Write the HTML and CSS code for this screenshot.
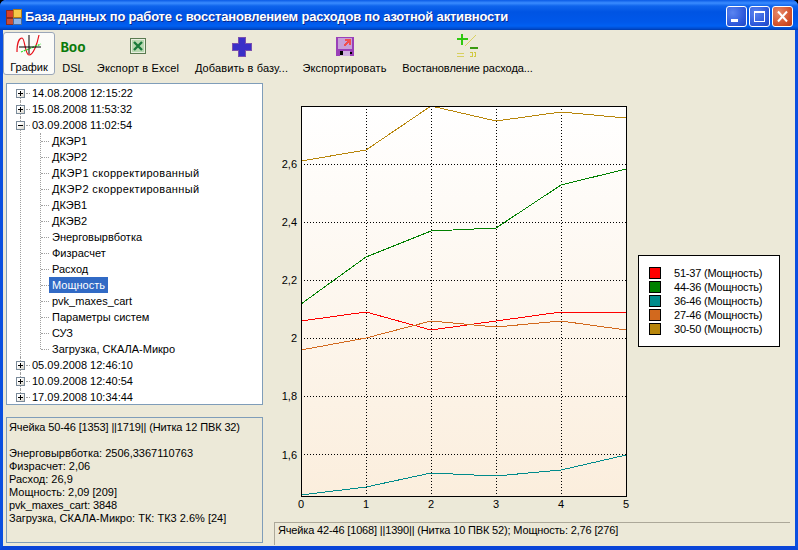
FILE: index.html
```html
<!DOCTYPE html>
<html lang="ru">
<head>
<meta charset="utf-8">
<title>База данных</title>
<link rel="stylesheet" href="styles.css">
</head>
<body>
<div class="window">
  <header class="titlebar">
    <svg class="app-icon" width="16" height="16" viewBox="0 0 16 16" shape-rendering="crispEdges">
      <rect x="0" y="1" width="7" height="7" fill="#d8402a" stroke="#8a2a20"/>
      <rect x="7" y="0" width="8" height="8" fill="#f6c84a" stroke="#b07a18"/>
      <rect x="0" y="9" width="7" height="6" fill="#c8503a" stroke="#8a2a20"/>
      <rect x="7" y="9" width="8" height="6" fill="#8fb4e8" stroke="#4a6a9a"/>
    </svg>
    <span class="title-text">База данных по работе с восстановлением расходов по азотной активности</span>
    <div class="win-buttons">
      <span class="win-btn"><svg width="19" height="19" viewBox="0 0 19 19" shape-rendering="crispEdges"><rect x="4" y="12" width="7" height="3" fill="#fff"/></svg></span>
      <span class="win-btn"><svg width="19" height="19" viewBox="0 0 19 19" shape-rendering="crispEdges"><rect x="4.5" y="4.5" width="10" height="10" fill="none" stroke="#fff"/><rect x="4" y="4" width="11" height="2" fill="#fff"/></svg></span>
      <span class="win-btn win-close"><svg width="19" height="19" viewBox="0 0 19 19"><path d="M5 4.500L14 14.500M14 4.500L5 14.500" stroke="#fff" stroke-width="2"/></svg></span>
    </div>
  </header>

  <nav class="toolbar">
    <div class="tool tool-active tool-graph">
      <svg class="tool-icon" width="26" height="24" viewBox="0 0 26 24">
        <path d="M1 19C1 8 4 5 6 5C9 5 9 22 13 22C17 22 21 12 23 2" fill="none" stroke="#e8101a" stroke-width="1.200"/>
        <path d="M5 19L25 11" fill="none" stroke="#30e030" stroke-width="1.300" stroke-dasharray="2 1"/>
        <path d="M13 2V21M3 14H25" stroke="#000" stroke-width="1"/>
      </svg>
      <span>График</span>
    </div>
    <div class="tool tool-dsl">
      <span class="boo">Boo</span>
      <span>DSL</span>
    </div>
    <div class="tool tool-excel">
      <svg class="tool-icon" width="16" height="16" viewBox="0 0 16 16" shape-rendering="crispEdges">
        <rect x="0.500" y="0.500" width="15" height="15" fill="#e8efe0" stroke="#5a7a50"/>
        <rect x="2" y="2" width="12" height="12" fill="#b8d8b0"/>
        <path d="M4 4L12 12M12 4L4 12" stroke="#1a7a3a" stroke-width="2.400" shape-rendering="auto"/>
      </svg>
      <span>Экспорт в Excel</span>
    </div>
    <div class="tool tool-add">
      <svg class="tool-icon" width="20" height="20" viewBox="0 0 20 20" shape-rendering="crispEdges">
        <path d="M6.500 .5H13.500V6.500H19.500V13.500H13.500V19.500H6.500V13.500H.5V6.500H6.500Z" fill="#3a2fc8" stroke="#7a50b0"/>
      </svg>
      <span>Добавить в базу...</span>
    </div>
    <div class="tool tool-export">
      <svg class="tool-icon" width="18" height="19" viewBox="0 0 18 19" shape-rendering="crispEdges">
        <rect width="18" height="19" fill="#9a40b8"/>
        <rect x="2" y="1" width="14" height="11" fill="#c8a0d8"/>
        <path d="M8 9L13 4M9 3H14V8" fill="none" stroke="#f05050" stroke-width="2"/>
        <rect x="4" y="14" width="10" height="5" fill="#d0b0e0"/>
        <rect x="4" y="14" width="3" height="4" fill="#000"/>
        <rect x="14" y="15" width="2" height="2" fill="#000"/>
      </svg>
      <span>Экспортировать</span>
    </div>
    <div class="tool tool-restore">
      <svg class="tool-icon" width="22" height="23" viewBox="0 0 22 23">
        <g shape-rendering="crispEdges">
          <path d="M0 5H11M5 0V11" stroke="#30c810" stroke-width="2"/>
          <path d="M13 14H21" stroke="#3a9a10" stroke-width="2"/>
          <path d="M0 19H7M0 22H7" stroke="#d8d060" stroke-width="1"/>
          <path d="M13 18H15V22H13M17 18H18V22H17" fill="none" stroke="#d0c840" stroke-width="1"/>
        </g>
        <path d="M8 12L19 1" stroke="#d8d060" stroke-width="1"/>
      </svg>
      <span>Востановление расхода...</span>
    </div>
  </nav>

  <main class="content">
    <section class="left-col">
      <ul class="tree">
        <li class="root"><div class="row"><span class="exp exp-plus"></span><span class="lbl">14.08.2008 12:15:22</span></div></li>
        <li class="root"><div class="row"><span class="exp exp-plus"></span><span class="lbl">15.08.2008 11:53:32</span></div></li>
        <li class="root"><div class="row"><span class="exp"></span><span class="lbl">03.09.2008 11:02:54</span></div>
          <ul class="children">
            <li class="row child"><span class="lbl">ДКЭР1</span></li>
            <li class="row child"><span class="lbl">ДКЭР2</span></li>
            <li class="row child"><span class="lbl lbl-wide">ДКЭР1 скорректированный</span></li>
            <li class="row child"><span class="lbl lbl-wide">ДКЭР2 скорректированный</span></li>
            <li class="row child"><span class="lbl">ДКЭВ1</span></li>
            <li class="row child"><span class="lbl">ДКЭВ2</span></li>
            <li class="row child"><span class="lbl">Энерговырвботка</span></li>
            <li class="row child"><span class="lbl">Физрасчет</span></li>
            <li class="row child"><span class="lbl">Расход</span></li>
            <li class="row child"><span class="lbl lbl-selected">Мощность</span></li>
            <li class="row child"><span class="lbl">pvk_maxes_cart</span></li>
            <li class="row child"><span class="lbl">Параметры систем</span></li>
            <li class="row child"><span class="lbl">СУЗ</span></li>
            <li class="row child"><span class="lbl">Загрузка, СКАЛА-Микро</span></li>
          </ul>
        </li>
        <li class="root"><div class="row"><span class="exp exp-plus"></span><span class="lbl">05.09.2008 12:46:10</span></div></li>
        <li class="root"><div class="row"><span class="exp exp-plus"></span><span class="lbl">10.09.2008 12:40:54</span></div></li>
        <li class="root root-last"><div class="row"><span class="exp exp-plus"></span><span class="lbl">17.09.2008 10:34:44</span></div></li>
      </ul>
      <div class="info">
        <p class="tight">Ячейка 50-46 [1353] ||1719|| (Нитка 12 ПВК 32)</p>
        <p class="blank">&nbsp;</p>
        <p>Энерговырвботка: 2506,3367110763</p>
        <p>Физрасчет: 2,06</p>
        <p>Расход: 26,9</p>
        <p>Мощность: 2,09 [209]</p>
        <p class="tight">pvk_maxes_cart: 3848</p>
        <p>Загрузка, СКАЛА-Микро: ТК: ТК3 2.6% [24]</p>
      </div>
    </section>

    <section class="right-col">
      <div class="chart-row">
        <svg class="chart" width="364" height="439" viewBox="274 83 364 439">
          <defs>
            <linearGradient id="plotbg" x1="0" y1="0" x2="0" y2="1">
              <stop offset="0" stop-color="#ffffff"/>
              <stop offset="1" stop-color="#fbeedd"/>
            </linearGradient>
          </defs>
          <rect class="plot-bg" x="301" y="106" width="325" height="390" fill="url(#plotbg)"/>
          <g class="grid">
            <path d="M366.500 106V496M431.500 106V496M496.500 106V496M561.500 106V496"/>
            <path d="M301 164.500H626M301 222.500H626M301 280.500H626M301 338.500H626M301 396.500H626M301 454.500H626"/>
          </g>
          <g class="series">
            <polyline class="s-red" points="301,321 366,312 431,330 496,321 561,312 626,312"/>
            <polyline class="s-green" points="301,304 366,257 431,231 496,228 561,185 626,169"/>
            <polyline class="s-teal" points="301,495 366,487 431,473 496,476 561,470 626,455"/>
            <polyline class="s-orange" points="301,350 366,338 431,321 496,327 561,321 626,330"/>
            <polyline class="s-gold" points="301,161 366,150 431,106 496,121 561,112 626,118"/>
          </g>
          <rect class="plot-frame" x="301.500" y="106.500" width="325" height="390"/>
          <g class="y-labels">
            <text x="297" y="168">2,6</text>
            <text x="297" y="226">2,4</text>
            <text x="297" y="284">2,2</text>
            <text x="297" y="342">2</text>
            <text x="297" y="400">1,8</text>
            <text x="297" y="459">1,6</text>
          </g>
          <g class="x-labels">
            <text x="301" y="508">0</text>
            <text x="366" y="508">1</text>
            <text x="431" y="508">2</text>
            <text x="496" y="508">3</text>
            <text x="561" y="508">4</text>
            <text x="626" y="508">5</text>
          </g>
        </svg>
        <div class="legend">
          <div class="leg-item"><i class="swatch sw-red"></i>51-37 (Мощность)</div>
          <div class="leg-item"><i class="swatch sw-green"></i>44-36 (Мощность)</div>
          <div class="leg-item"><i class="swatch sw-teal"></i>36-46 (Мощность)</div>
          <div class="leg-item"><i class="swatch sw-orange"></i>27-46 (Мощность)</div>
          <div class="leg-item"><i class="swatch sw-gold"></i>30-50 (Мощность)</div>
        </div>
      </div>
      <div class="status">Ячейка 42-46 [1068] ||1390|| (Нитка 10 ПВК 52); Мощность: 2,76 [276]</div>
    </section>
  </main>
</div>
</body>
</html>
```
FILE: styles.css
```css
* { box-sizing: border-box; }
html, body { margin: 0; padding: 0; }
body {
  width: 798px;
  height: 550px;
  overflow: hidden;
  background: #000;
  font-family: "Liberation Sans", Arial, sans-serif;
  font-size: 11px;
  color: #000;
}
ul { list-style: none; margin: 0; padding: 0; }
p { margin: 0; }

.window {
  width: 798px;
  height: 550px;
  display: flex;
  flex-direction: column;
  background: #ece9d8;
  border-left: 3px solid #0a4fe0;
  border-right: 3px solid #0a4fe0;
  border-bottom: 4px solid #0a45d8;
  border-radius: 6px 6px 0 0;
  position: relative;
}

/* title bar */
.titlebar {
  height: 30px;
  flex: none;
  margin: 0 -3px;
  padding: 0 5px 0 6px;
  display: flex;
  align-items: center;
  border-radius: 6px 6px 0 0;
  background: linear-gradient(180deg, #0a5ae6 0, #3a8cff 3px, #0f64ec 6px, #0054e3 12px, #0058ea 22px, #0060f2 26px, #0048c8 29px, #003aa8 30px);
}
.app-icon { flex: none; margin-top: 3px; }
.title-text {
  margin-left: 3px;
  margin-top: 3px;
  color: #fff;
  font-weight: bold;
  font-size: 13px;
  letter-spacing: -0.19px;
  white-space: nowrap;
  text-shadow: 1px 1px 0 #0a2a90;
}
.win-buttons { margin-left: auto; display: flex; gap: 2px; margin-top: 3px; }
.win-btn {
  width: 21px;
  height: 21px;
  border: 1px solid #fff;
  border-radius: 3px;
  background: radial-gradient(circle at 30% 30%, #5a84f0, #2a55d8 70%, #2248c0);
  display: block;
}
.win-btn svg { display: block; }
.win-close { background: radial-gradient(circle at 30% 30%, #e88a6a, #d2502a 65%, #b83a18); }

/* toolbar */
.toolbar {
  height: 50px;
  flex: none;
  display: flex;
  padding-top: 2px;
  white-space: nowrap;
}
.tool {
  display: flex;
  flex-direction: column;
  align-items: center;
  justify-content: flex-end;
  height: 43px;
  line-height: 13px;
}
.tool-icon { display: block; }
.tool-active {
  background: #fbfbf8;
  border: 1px solid #9aa6b8;
  border-radius: 3px;
}
.tool-graph { width: 52px; margin-right: 3px; }
.tool-graph .tool-icon { margin-bottom: 4px; }
.tool-dsl { width: 30px; margin-right: 9px; }
.tool-dsl span:last-child { margin-top: 7px; }
.boo {
  font-family: "Liberation Mono", monospace;
  font-size: 14px;
  font-weight: bold;
  color: #0a7a0a;
  line-height: 14px;
}
.tool-excel { width: 82px; margin-right: 16px; letter-spacing: 0.14px; }
.tool-excel .tool-icon { margin-bottom: 8px; }
.tool-add { width: 93px; margin-right: 15px; letter-spacing: 0.12px; }
.tool-add .tool-icon { margin-bottom: 5px; }
.tool-export { width: 83px; margin-right: 16px; letter-spacing: 0.14px; }
.tool-export .tool-icon { margin-bottom: 6px; }
.tool-restore { width: 131px; letter-spacing: -0.08px; }
.tool-restore .tool-icon { margin-bottom: 5px; }

/* main area */
.content {
  flex: 1;
  display: flex;
  gap: 11px;
  padding: 3px 0 3px 3px;
  min-height: 0;
}
.left-col {
  width: 257px;
  flex: none;
  display: flex;
  flex-direction: column;
  gap: 12px;
}

/* tree */
.tree {
  height: 322px;
  flex: none;
  padding-top: 1px;
  background: #fff;
  border: 1px solid #7f9db9;
  overflow: hidden;
}
.root { position: relative; }
.root::before {
  content: "";
  position: absolute;
  left: 13px;
  top: 0;
  bottom: 0;
  border-left: 1px dotted #a0a0a0;
}
.root:first-child::before { top: 8px; }
.root-last::before { bottom: 8px; }
.row {
  height: 16px;
  display: flex;
  align-items: center;
  position: relative;
  white-space: nowrap;
}
.exp {
  width: 9px;
  height: 9px;
  margin-left: 9px;
  flex: none;
  position: relative;
  z-index: 1;
  border: 1px solid #7a8a99;
  background: linear-gradient(135deg, #ffffff 30%, #d8d4c8);
}
.exp::before {
  content: "";
  position: absolute;
  left: 1px;
  top: 3px;
  width: 5px;
  height: 1px;
  background: #000;
}
.exp-plus::after {
  content: "";
  position: absolute;
  left: 3px;
  top: 1px;
  width: 1px;
  height: 5px;
  background: #000;
}
.root > .row > .lbl { margin-left: 4px; position: relative; }
.root > .row > .lbl::before {
  content: "";
  position: absolute;
  left: -3px;
  top: 8px;
  width: 4px;
  border-top: 1px dotted #a0a0a0;
}
.lbl { padding: 0 3px; line-height: 16px; height: 16px; display: block; }
.lbl-selected { background: #316ac5; color: #fff; }
.lbl-wide { letter-spacing: 0.34px; }
.children { position: relative; }
.children::before {
  content: "";
  position: absolute;
  left: 33px;
  top: 0;
  bottom: 8px;
  border-left: 1px dotted #a0a0a0;
}
.child { padding-left: 42px; }
.child::before {
  content: "";
  position: absolute;
  left: 34px;
  top: 8px;
  width: 8px;
  border-top: 1px dotted #a0a0a0;
}

/* info panel */
.info {
  height: 126px;
  flex: none;
  border: 1px solid #7f9db9;
  padding: 3px 2px 0;
  line-height: 13px;
  white-space: nowrap;
}
.tight { letter-spacing: -0.13px; }

/* chart */
.right-col {
  flex: 1;
  min-width: 0;
  display: flex;
  flex-direction: column;
}
.chart-row { display: flex; height: 439px; flex: none; }
.chart { display: block; flex: none; }
.plot-frame { fill: none; stroke: #000; stroke-width: 1; shape-rendering: crispEdges; }
.grid path {
  fill: none;
  stroke: #000;
  stroke-width: 1;
  stroke-dasharray: 1 2;
  shape-rendering: crispEdges;
}
.series polyline { fill: none; stroke-width: 1; shape-rendering: crispEdges; }
.s-red { stroke: #ff0000; }
.s-green { stroke: #008000; }
.s-teal { stroke: #008b8b; }
.s-orange { stroke: #d2691e; }
.s-gold { stroke: #b8860b; }
.chart text { font-family: "Liberation Sans", Arial, sans-serif; font-size: 11px; fill: #000; }
.y-labels text { text-anchor: end; }
.x-labels text { text-anchor: middle; }

/* legend */
.legend {
  width: 142px;
  height: 92px;
  margin-top: 172px;
  flex: none;
  background: #fff;
  border: 1px solid #000;
  padding: 10px 0 0 10px;
  white-space: nowrap;
  letter-spacing: -0.2px;
}
.leg-item { height: 14px; display: flex; align-items: center; line-height: 14px; }
.swatch {
  width: 12px;
  height: 12px;
  margin-right: 13px;
  flex: none;
  border: 1px solid #000;
}
.sw-red { background: #ff0000; }
.sw-green { background: #008000; }
.sw-teal { background: #008b8b; }
.sw-orange { background: #d2691e; }
.sw-gold { background: #b8860b; }

/* status */
.status {
  height: 23px;
  flex: none;
  margin-right: 5px;
  padding: 1px 0 0 3px;
  line-height: 13px;
  letter-spacing: -0.16px;
  border-top: 1px solid #aca899;
  border-left: 1px solid #aca899;
  white-space: nowrap;
}
```
